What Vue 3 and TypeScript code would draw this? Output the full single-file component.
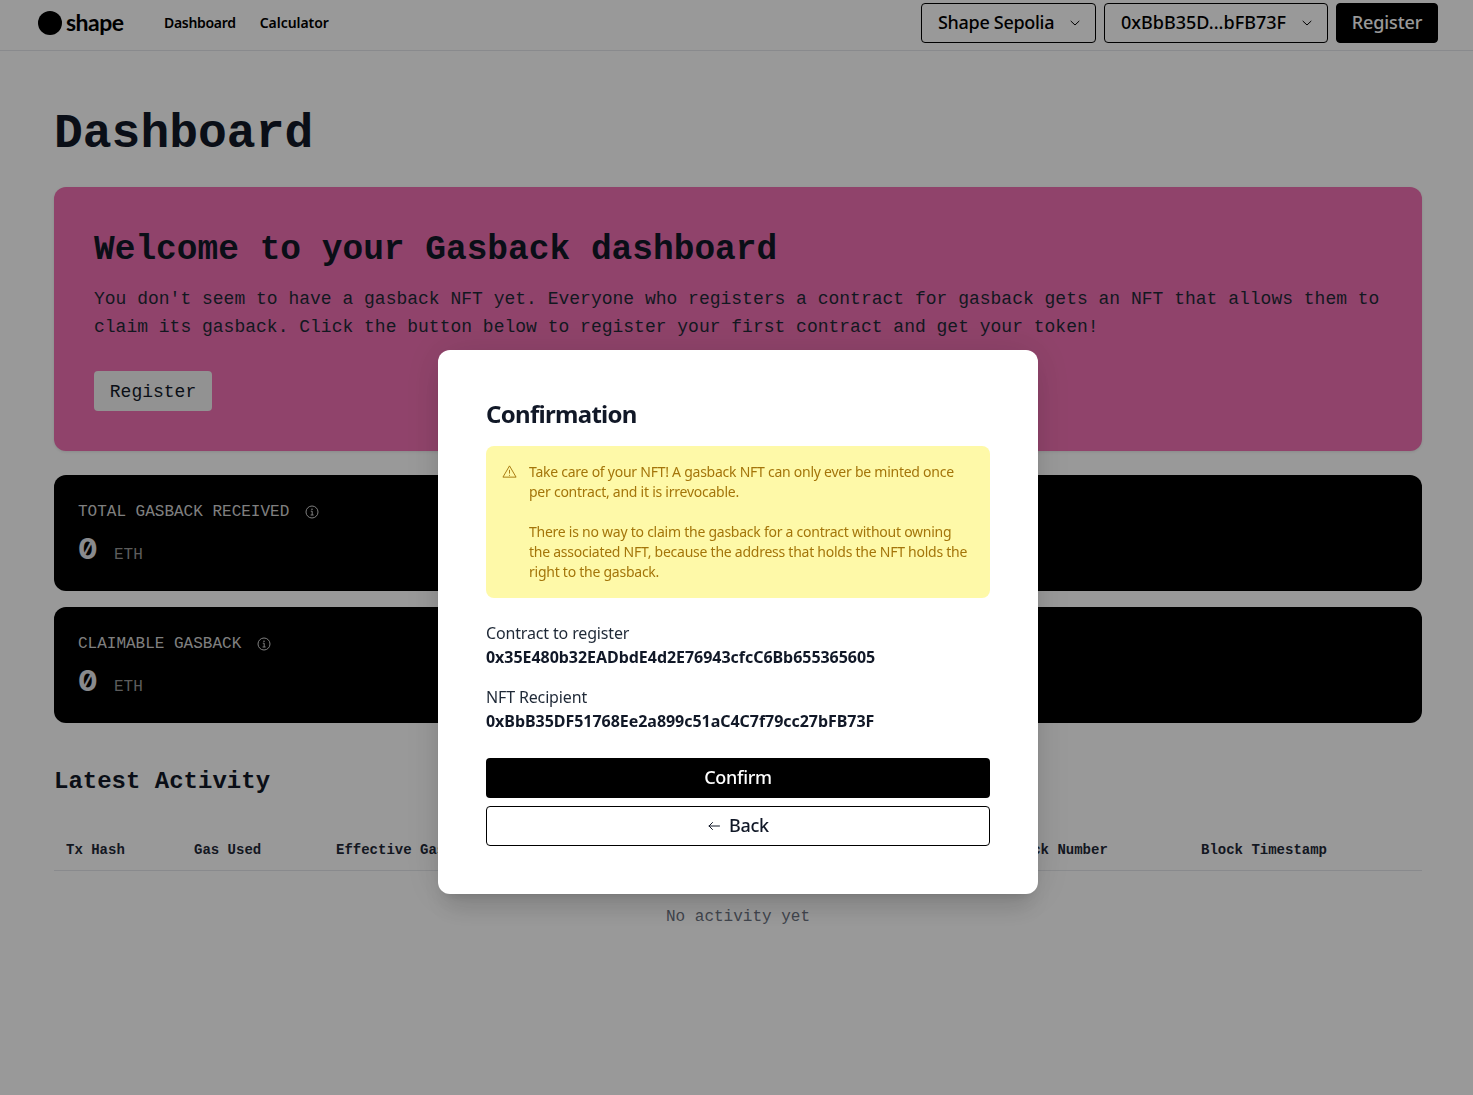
<script setup lang="ts">
const columns: string[] = ['Tx Hash', 'Gas Used', 'Effective Gas Price', 'Gas Spent', 'Block Number', 'Block Timestamp']
const stats: { label: string }[] = [
  { label: 'TOTAL GASBACK RECEIVED' },
  { label: 'CLAIMABLE GASBACK' },
]
</script>

<template>
  <div class="page">
    <header class="topbar">
      <div class="brand">
        <span class="dot"></span>
        <span class="word">shape</span>
      </div>
      <nav class="nav">
        <a>Dashboard</a>
        <a>Calculator</a>
      </nav>
      <div class="actions">
        <button class="hbtn outline net">
          <span>Shape Sepolia</span>
          <svg class="chev" viewBox="0 0 12 12" fill="none"><path d="M2 4.2 6 8l4-3.8" stroke="currentColor" stroke-width="1" stroke-linecap="round" stroke-linejoin="round"/></svg>
        </button>
        <button class="hbtn outline acct">
          <span>0xBbB35D...bFB73F</span>
          <svg class="chev" viewBox="0 0 12 12" fill="none"><path d="M2 4.2 6 8l4-3.8" stroke="currentColor" stroke-width="1" stroke-linecap="round" stroke-linejoin="round"/></svg>
        </button>
        <button class="hbtn solid">Register</button>
      </div>
    </header>

    <main class="content">
      <h1 class="title">Dashboard</h1>

      <section class="hero">
        <h2>Welcome to your Gasback dashboard</h2>
        <p>You don't seem to have a gasback NFT yet. Everyone who registers a contract for gasback gets an NFT that allows them to claim its gasback. Click the button below to register your first contract and get your token!</p>
        <button class="hero-btn">Register</button>
      </section>

      <section v-for="s in stats" :key="s.label" class="stat">
        <div class="stat-label">
          <span>{{ s.label }}</span>
          <svg class="info" viewBox="0 0 14 14" fill="none">
            <circle cx="7" cy="7" r="6" stroke="currentColor" stroke-width="1"/>
            <path d="M5.8 6.2H7.2V10M5.6 10H8.6" stroke="currentColor" stroke-width="1"/>
            <circle cx="7" cy="4.2" r=".8" fill="currentColor"/>
          </svg>
        </div>
        <div class="stat-value"><b>0</b><span>ETH</span></div>
      </section>

      <h3 class="latest">Latest Activity</h3>
      <div class="thead">
        <div v-for="c in columns" :key="c" class="th">{{ c }}</div>
      </div>
      <div class="empty">No activity yet</div>
    </main>

    <div class="overlay">
      <div class="modal">
        <h2 class="m-title">Confirmation</h2>
        <div class="alert">
          <svg class="warn" viewBox="0 0 16 16" fill="none">
            <path d="M8 2 15 14H1L8 2Z" stroke="currentColor" stroke-width="1" stroke-linejoin="round"/>
            <path d="M8 6.2v4" stroke="currentColor" stroke-width="1"/>
            <circle cx="8" cy="12" r=".6" fill="currentColor"/>
          </svg>
          <div class="alert-text">
            <p>Take care of your NFT! A gasback NFT can only ever be minted once per contract, and it is irrevocable.</p>
            <p>There is no way to claim the gasback for a contract without owning the associated NFT, because the address that holds the NFT holds the right to the gasback.</p>
          </div>
        </div>
        <div class="field">
          <div class="f-label">Contract to register</div>
          <div class="f-value">0x35E480b32EADbdE4d2E76943cfcC6Bb655365605</div>
        </div>
        <div class="field second">
          <div class="f-label">NFT Recipient</div>
          <div class="f-value">0xBbB35DF51768Ee2a899c51aC4C7f79cc27bFB73F</div>
        </div>
        <button class="m-btn primary">Confirm</button>
        <button class="m-btn ghost">
          <svg class="back" viewBox="0 0 14 14" fill="none"><path d="M12.5 7H2M5.5 3.5 2 7l3.5 3.5" stroke="currentColor" stroke-width="1" stroke-linecap="round" stroke-linejoin="round"/></svg>
          <span>Back</span>
        </button>
      </div>
    </div>
  </div>
</template>

<style>
html, body { margin: 0; background: #fff; }
</style>

<style scoped>
.page {
  min-height: 1095px;
  box-sizing: border-box;
  background: #fff;
  color: #111827;
  font-family: "Noto Sans", sans-serif;
  overflow: hidden;
}
button { font-family: inherit; cursor: pointer; box-sizing: border-box; }

.topbar {
  height: 51px;
  box-sizing: border-box;
  border-bottom: 1px solid #e5e7eb;
  display: flex;
  align-items: flex-start;
  padding: 3px 35px 0 38px;
}
.brand { display: flex; align-items: center; gap: 4px; height: 40px; width: 126px; }
.dot { width: 24px; height: 24px; border-radius: 50%; background: #000; }
.word { font-family: Lato, sans-serif; font-size: 23px; font-weight: 700; letter-spacing: -0.5px; color: #000; line-height: 24px; margin-top: -3px; }
.nav { display: flex; gap: 24px; height: 38px; align-items: center; font-size: 14px; font-weight: 600; letter-spacing: -0.3px; color: #000; }
.nav a + a { letter-spacing: -0.05px; }
.actions { margin-left: auto; display: flex; gap: 8px; }
.hbtn {
  height: 40px;
  border-radius: 4px;
  font-size: 18px;
  font-weight: 500;
  display: flex;
  align-items: center;
  justify-content: space-between;
  padding: 0 16px 2px;
}
.outline { background: transparent; border: 1px solid #000; color: #000; }
.solid { background: #000; border: 1px solid #000; color: #fff; letter-spacing: -0.1px; }
.net { width: 175px; letter-spacing: -0.3px; }
.acct { width: 224px; letter-spacing: 0; }
.solid { width: 102px; justify-content: center; padding: 0 0 2px; }
.chev { width: 12px; height: 12px; margin-top: 2px; margin-right: -1.5px; }

.content { padding: 0 51px 0 54px; font-family: "Liberation Mono", monospace; }
.title {
  margin: 0;
  padding-top: 53px;
  height: 60px;
  font-size: 48px;
  line-height: 60px;
  font-weight: 700;
  color: #111827;
  box-sizing: content-box;
}
.hero {
  margin-top: 23px;
  height: 264px;
  box-sizing: border-box;
  background: #f071b2;
  border-radius: 12px;
  padding: 42px 40px 40px;
  box-shadow: 0 1px 3px rgba(0,0,0,.1);
}
.hero h2 {
  margin: 0;
  font-size: 34.5px;
  line-height: 42px;
  font-weight: 700;
  color: #111827;
}
.hero p {
  margin: 14px 0 0;
  font-size: 18px;
  line-height: 28px;
  color: #1f2937;
}
.hero-btn {
  margin-top: 30px;
  width: 118px;
  height: 40px;
  border: 0;
  border-radius: 4px;
  background: #f3f3f3;
  color: #111827;
  font-family: "Liberation Mono", monospace;
  font-size: 18px;
  padding: 1px 0 0;
  display: block;
}
.stat {
  margin-top: 24px;
  height: 116px;
  box-sizing: border-box;
  background: #000;
  border-radius: 12px;
  padding: 25px 24px 24px;
  color: #fff;
}
.stat + .stat { margin-top: 16px; }
.stat-label { display: flex; align-items: center; gap: 16px; font-size: 16px; line-height: 24px; color: #d4d4d4; }
.info { width: 14px; height: 14px; }
.stat-value { display: flex; align-items: baseline; gap: 18px; margin-top: 7px; line-height: 36px; }
.stat-value b { font-family: Inter, "DejaVu Sans Mono", monospace; font-feature-settings: "zero" 1; width: 18px; text-align: center; font-size: 29px; font-weight: 700; color: #e5e7eb; }
.stat-value span { font-size: 16px; color: #9a9a9a; }
.latest {
  margin: 44px 0 0;
  font-size: 24px;
  line-height: 30px;
  font-weight: 700;
  color: #111827;
}
.thead {
  margin-top: 29px;
  height: 45px;
  box-sizing: border-box;
  border-bottom: 1px solid #e5e7eb;
  display: grid;
  grid-template-columns: 128px 142px 400px 271px 194px 1fr;
  align-items: center;
  padding-top: 4px;
  font-size: 14px;
  font-weight: 700;
  color: #1f2937;
}
.th { padding-left: 12px; white-space: nowrap; }
.empty { text-align: center; margin-top: 34px; font-size: 16px; line-height: 24px; color: #6b7280; }

.overlay {
  position: fixed;
  inset: 0;
  background: rgba(0,0,0,.4);
  padding: 350px 0 0 438px;
  box-sizing: border-box;
}
.modal {
  width: 600px;
  height: 544px;
  box-sizing: border-box;
  background: #fff;
  border-radius: 12px;
  padding: 48px;
  box-shadow: 0 20px 25px -5px rgba(0,0,0,.1), 0 8px 10px -6px rgba(0,0,0,.1), 0 0 40px rgba(0,0,0,.12);
}
.m-title { margin: 0; font-size: 24px; line-height: 32px; font-weight: 700; letter-spacing: -0.7px; color: #111827; }
.alert {
  margin-top: 16px;
  height: 152px;
  box-sizing: border-box;
  background: #fef9a8;
  border-radius: 8px;
  padding: 16px 18px 16px 16px;
  display: flex;
  gap: 12px;
  color: #a4750a;
  font-size: 14px;
  line-height: 20px;
  letter-spacing: -0.25px;
}
.warn { width: 15px; height: 15px; margin-top: 2px; flex: none; }
.alert-text p { margin: 0; }
.alert-text p + p { margin-top: 20px; }
.field { margin-top: 23px; font-size: 16px; line-height: 24px; }
.field.second { margin-top: 16px; }
.f-label { color: #1f2937; letter-spacing: -0.15px; }
.f-value { font-weight: 700; color: #111827; letter-spacing: -0.04px; }
.m-btn {
  display: flex;
  align-items: center;
  justify-content: center;
  gap: 8px;
  width: 100%;
  height: 40px;
  padding: 0 0 3px;
  border-radius: 4px;
  font-size: 18px;
  font-weight: 500;
  letter-spacing: -0.3px;
}
.primary { margin-top: 25px; background: #000; color: #fff; border: 0; }
.ghost { margin-top: 8px; background: #fff; color: #111827; border: 1px solid #000; }
.back { width: 14px; height: 14px; margin-top: 3px; }
</style>
